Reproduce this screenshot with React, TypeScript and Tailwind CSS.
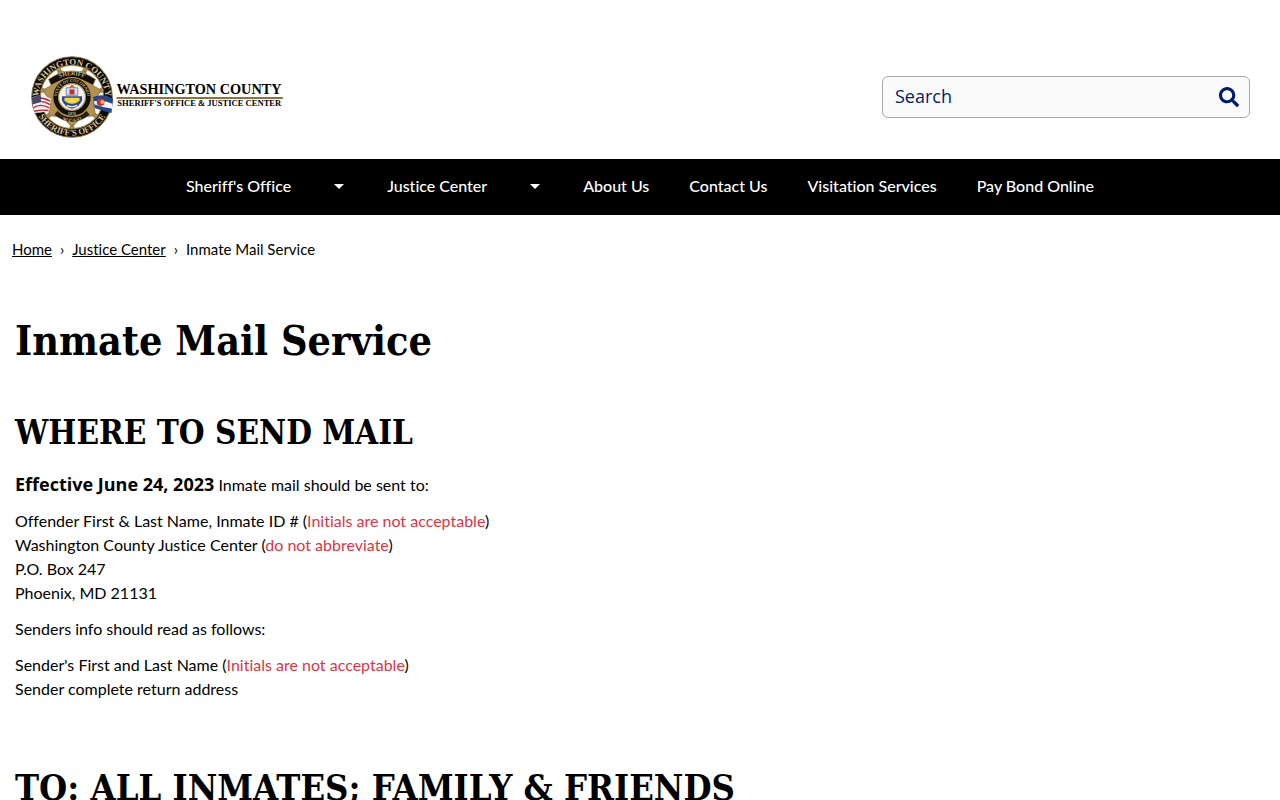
import React from "react";
import { FaSearch } from "react-icons/fa";

const NAV_ITEMS = [
  { label: "Sheriff's Office", menu: true },
  { label: "Justice Center", menu: true },
  { label: "About Us", menu: false },
  { label: "Contact Us", menu: false },
  { label: "Visitation Services", menu: false },
  { label: "Pay Bond Online", menu: false },
];

const GOLD = "#b39150";

// seven points, each tipped with a small ball
const STAR_TIPS = Array.from({ length: 7 }, (_, i) => (i * 2 * Math.PI) / 7 + Math.PI / 2);

function Star() {
  const points = STAR_TIPS
    .flatMap(a => {
      const b = a + Math.PI / 7;
      return [
        `${50 + 36 * Math.cos(a)},${50 + 36 * Math.sin(a)}`,
        `${50 + 26 * Math.cos(b)},${50 + 26 * Math.sin(b)}`,
      ];
    })
    .join(" ");
  return (
    <g fill={GOLD} stroke="#7a5c2a" strokeWidth="0.8">
      <polygon points={points} />
      {STAR_TIPS.map(a => (
        <circle key={a} cx={50 + 36 * Math.cos(a)} cy={50 + 36 * Math.sin(a)} r="2.4" />
      ))}
    </g>
  );
}

function Seal() {
  return (
    <g>
      <defs>
        <path id="ring-top" d="M 10.5 58 A 40 40 0 1 1 89.5 58" />
        <path id="ring-bottom" d="M 4 50 A 46 46 0 0 0 96 50" />
        <path id="inner-top" d="M 32 50 A 18 18 0 0 1 68 50" />
        <path id="banner" d="M 26 32 Q 50 16 74 32" />
        <path id="inner-bottom" d="M 28 70 Q 50 90 72 70" />
      </defs>
      <circle cx="50" cy="50" r="48" fill="#090806" stroke="#927244" strokeWidth="1.2" />
      <circle cx="50" cy="50" r="37.5" fill="#fff" stroke={GOLD} strokeWidth="1.2" />
      <g fill="#d7c59c" fontFamily="Liberation Serif, serif" fontWeight="bold" textAnchor="middle">
        <text fontSize="10.5">
          <textPath href="#ring-top" startOffset="50%">WASHINGTON COUNTY</textPath>
        </text>
        <text fontSize="10.5">
          <textPath href="#ring-bottom" startOffset="50%">SHERIFF'S OFFICE</textPath>
        </text>
      </g>
      <Star />
      <path d="M 22 29 Q 50 9 78 29 L 75 36 Q 50 20 25 36 Z" fill="#11100d" stroke={GOLD} strokeWidth="1" />
      <path d="M 29 71 Q 50 88 71 71 L 67 66 Q 50 79 33 66 Z" fill="#2b2210" />
      {/* US flag */}
      <g transform="translate(0 5)">
        <path d="M 2 46 Q 12 40 25 47 L 23 61 Q 13 64 5 64 Z" fill="#f2eef0" />
        <path d="M 3 49 Q 11 43 24 50 M 3 53 Q 12 47 24 54 M 4 58 Q 12 52 23 58 M 5 62 Q 13 60 22 61" fill="none" stroke="#b92736" strokeWidth="1.7" />
        <path d="M 2 46 Q 7 43 13 43 L 13 51 L 3 54 Z" fill="#4a4868" />
      </g>
      {/* Colorado flag */}
      <g transform="translate(0 5)">
        <path d="M 75 45 Q 87 40 99 47 L 97 64 Q 88 62 77 58 Z" fill="#23468d" />
        <path d="M 76 50 Q 88 48 98 53 L 98 59 Q 89 58 77 54 Z" fill="#f2f2f2" />
        <circle cx="84" cy="51" r="4.6" fill="#c62c32" />
        <circle cx="86" cy="51" r="2.4" fill="#f0bf3c" />
      </g>
      <circle cx="50" cy="50" r="23" fill="#11100d" stroke={GOLD} strokeWidth="1.6" />
      <circle cx="50" cy="50" r="16" fill="#f4f3ee" stroke={GOLD} strokeWidth="1.4" />
      <g fill="#c9b98c" fontFamily="Liberation Serif, serif" fontWeight="bold" textAnchor="middle">
        <text fontSize="7">
          <textPath href="#banner" startOffset="50%">SHERIFF</textPath>
        </text>
        <text fontSize="5">
          <textPath href="#inner-top" startOffset="50%">STATE OF COLORADO</textPath>
        </text>
        <text fontSize="6">
          <textPath href="#inner-bottom" startOffset="50%">W·C·S·O</textPath>
        </text>
        <text x="50" y="71" fontSize="5">1876</text>
      </g>
      {/* state shield */}
      <path d="M 43 39 H 57 V 48 H 43 Z" fill="#d8dce8" stroke="#55608a" strokeWidth="0.8" />
      <path d="M 46 39 L 50 35 L 54 39 Z" fill="#d4662c" />
      <path d="M 47 41 H 53 V 47 H 47 Z" fill="#b6343c" />
      <path d="M 38 49 H 62 V 54 Q 59 62 50 64 Q 41 62 38 54 Z" fill="#2c4a8e" />
      <path d="M 41 51 H 59 V 54 Q 56 58 50 58 Q 44 58 41 54 Z" fill="#f0d64b" />
      <path d="M 44 60 Q 50 63 56 60" fill="none" stroke="#f4f3ee" strokeWidth="1.4" />
    </g>
  );
}

function Logo() {
  return (
    <a href="#" aria-label="Washington County home">
      <svg viewBox="0 0 304 100" className="h-[84px]">
        <Seal />
        <g fontFamily="Liberation Serif, serif" fontWeight="bold" fill="#000">
          <text x="103" y="47" fontSize="17">WASHINGTON COUNTY</text>
          <rect x="103" y="50" width="198" height="2.4" fill="#8f713d" />
          <text x="104" y="61" fontSize="10.2">SHERIFF'S OFFICE &amp; JUSTICE CENTER</text>
        </g>
      </svg>
    </a>
  );
}

function Note({ children }: { children: React.ReactNode }) {
  return <span className="text-[#dc3545]">{children}</span>;
}

export default function App() {
  return (
    <div className="min-h-screen bg-white text-black text-base font-['Trebuchet_MS','Lato',sans-serif] [font-variant-ligatures:none]">
      <header>
        <div className="flex items-center justify-between px-[30px] pt-[55px] pb-5">
          <Logo />
          <form
            role="search"
            onSubmit={e => e.preventDefault()}
            className="flex items-center w-[368px] h-[42px] rounded-md border border-[#a9a9a9] bg-[#fafafa] text-[#001a70]"
          >
            <input
              type="search"
              aria-label="Search"
              placeholder="Search"
              className="flex-1 min-w-0 h-full pl-3 pb-[2px] text-lg font-['Trebuchet_MS','Open_Sans',sans-serif] bg-transparent outline-none placeholder:text-[#001a70]"
            />
            <button type="submit" aria-label="Submit search" className="px-[10px]">
              <FaSearch className="size-5" />
            </button>
          </form>
        </div>

        <nav className="bg-black text-white">
          <ul className="flex justify-center h-14 pb-[2px]">
            {NAV_ITEMS.map(item => (
              <li key={item.label} className="flex items-center">
                <a href="#" className="px-5 text-base font-medium whitespace-nowrap">{item.label}</a>
                {item.menu && (
                  <button type="button" aria-label={`Open ${item.label} menu`} className="flex justify-center w-14 py-3">
                    <svg viewBox="0 0 10 5" className="w-[10px] h-[5px]" fill="currentColor" aria-hidden>
                      <path d="M0 0h10L5 5z" />
                    </svg>
                  </button>
                )}
              </li>
            ))}
          </ul>
        </nav>
      </header>

      <nav aria-label="Breadcrumb" className="px-3 pt-[22px]">
        <ol className="flex text-[15px] leading-6">
          <li><a href="#" className="underline">Home</a></li>
          <li aria-hidden className="px-2">›</li>
          <li><a href="#" className="underline">Justice Center</a></li>
          <li aria-hidden className="px-2">›</li>
          <li aria-current="page">Inmate Mail Service</li>
        </ol>
      </nav>

      <main className="px-[15px]">
        <h1 className="pt-14 font-['Museo_Slab','DejaVu_Serif_Condensed','DejaVu_Serif',serif] text-[41px] leading-[48px] font-bold">
          Inmate Mail Service
        </h1>

        <section className="pt-12">
          <h2 className="mb-[19px] font-['Museo_Slab','DejaVu_Serif_Condensed','DejaVu_Serif',serif] text-[33px] leading-10 font-bold">
            WHERE TO SEND MAIL
          </h2>
          <div className="flex flex-col gap-3 text-base leading-6">
            <p>
              <strong className="text-lg leading-6 font-['Trebuchet_MS','Open_Sans',sans-serif]">Effective June 24, 2023</strong>{" "}
              Inmate mail should be sent to:
            </p>
            <p>
              Offender First &amp; Last Name, Inmate ID # (<Note>Initials are not acceptable</Note>)<br />
              Washington County Justice Center (<Note>do not abbreviate</Note>)<br />
              P.O. Box 247<br />
              Phoenix, MD 21131
            </p>
            <p>Senders info should read as follows:</p>
            <p>
              Sender's First and Last Name (<Note>Initials are not acceptable</Note>)<br />
              Sender complete return address
            </p>
          </div>
        </section>

        <section className="pt-16">
          <h2 className="font-['Museo_Slab','DejaVu_Serif_Condensed','DejaVu_Serif',serif] text-[36px] leading-[44px] font-bold">
            TO: ALL INMATES; FAMILY &amp; FRIENDS
          </h2>
        </section>
      </main>
    </div>
  );
}
